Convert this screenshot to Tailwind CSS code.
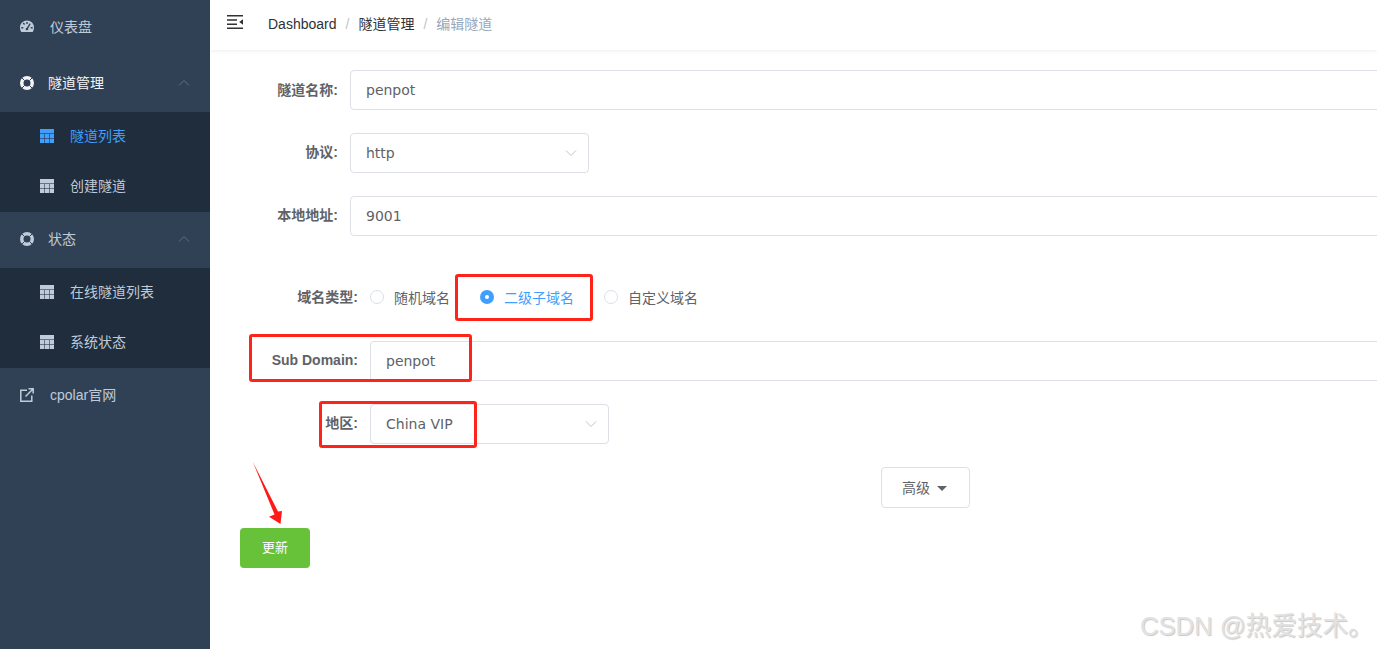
<!DOCTYPE html>
<html lang="zh">
<head>
<meta charset="utf-8">
<title>编辑隧道</title>
<script src="https://cdn.jsdelivr.net/npm/@tailwindcss/browser@4"></script>
</head>
<body class="overflow-hidden bg-white">
<div class="relative flex h-[649px] w-[1377px] overflow-hidden font-['Liberation_Sans','Noto_Sans_CJK_SC',sans-serif] text-sm">

  <aside class="h-full w-[210px] shrink-0 bg-[#304156] text-[#bfcbd9]">
    <div class="flex h-14 items-center pb-[2px] pl-5">
      <svg class="h-[14px] w-[14px] shrink-0" viewBox="0 0 14 14"><path fill="currentColor" fill-rule="evenodd" d="M7 .5C3.100.5 0 3.600 0 7.500c0 1.700.5 3.100 1.300 4.500h11.400c.8-1.400 1.300-2.800 1.300-4.500C14 3.600 10.900.5 7 .5ZM6.300 2h1.400v2H6.300ZM2.700 3.600l1-1 1.400 1.500-1 1ZM1.300 7h2v1.400h-2ZM10.700 7h2v1.400h-2ZM9.600 3.200l1.100.7-2.600 4.500a1.300 1.300 0 1 1-1.200-.7Z"/></svg>
      <span class="ml-4">仪表盘</span>
    </div>

    <div class="flex h-14 items-center pb-[2px] pl-5 pr-[20px] text-[#f4f4f5]">
      <svg class="h-[14px] w-[14px] shrink-0" viewBox="0 0 14 14"><circle cx="7" cy="7" r="5.250" fill="none" stroke="currentColor" stroke-width="3.500"/><path stroke="#304156" stroke-width="1" d="M2 2l2.500 2.500M12 2 9.500 4.500M2 12l2.500-2.500M12 12 9.500 9.500"/></svg>
      <span class="ml-[14px]">隧道管理</span>
      <svg class="ml-auto h-2 w-3 text-[#5f6f83]" viewBox="0 0 12 8"><path fill="none" stroke="currentColor" stroke-width="1" d="M1 6.500 6 1.500l5 5"/></svg>
    </div>
    <div class="bg-[#1f2d3d]">
      <div class="flex h-[50px] items-center pb-[2px] pl-10 text-[#409eff]">
        <svg class="h-[14px] w-[14px] shrink-0" viewBox="0 0 14 14"><rect width="14" height="14" fill="currentColor"/><path stroke="#1f2d3d" stroke-opacity=".55" d="M0 4.500h14M0 9.500h14M4.500 5v9M9.500 5v9"/></svg>
        <span class="ml-4">隧道列表</span>
      </div>
      <div class="flex h-[50px] items-center pb-[2px] pl-10">
        <svg class="h-[14px] w-[14px] shrink-0" viewBox="0 0 14 14"><rect width="14" height="14" fill="currentColor"/><path stroke="#1f2d3d" stroke-opacity=".55" d="M0 4.500h14M0 9.500h14M4.500 5v9M9.500 5v9"/></svg>
        <span class="ml-4">创建隧道</span>
      </div>
    </div>

    <div class="flex h-14 items-center pb-[2px] pl-5 pr-[20px]">
      <svg class="h-[14px] w-[14px] shrink-0" viewBox="0 0 14 14"><circle cx="7" cy="7" r="5.250" fill="none" stroke="currentColor" stroke-width="3.500"/><path stroke="#304156" stroke-width="1" d="M2 2l2.500 2.500M12 2 9.500 4.500M2 12l2.500-2.500M12 12 9.500 9.500"/></svg>
      <span class="ml-[14px]">状态</span>
      <svg class="ml-auto h-2 w-3 text-[#5f6f83]" viewBox="0 0 12 8"><path fill="none" stroke="currentColor" stroke-width="1" d="M1 6.500 6 1.500l5 5"/></svg>
    </div>
    <div class="bg-[#1f2d3d]">
      <div class="flex h-[50px] items-center pb-[2px] pl-10">
        <svg class="h-[14px] w-[14px] shrink-0" viewBox="0 0 14 14"><rect width="14" height="14" fill="currentColor"/><path stroke="#1f2d3d" stroke-opacity=".55" d="M0 4.500h14M0 9.500h14M4.500 5v9M9.500 5v9"/></svg>
        <span class="ml-4">在线隧道列表</span>
      </div>
      <div class="flex h-[50px] items-center pb-[2px] pl-10">
        <svg class="h-[14px] w-[14px] shrink-0" viewBox="0 0 14 14"><rect width="14" height="14" fill="currentColor"/><path stroke="#1f2d3d" stroke-opacity=".55" d="M0 4.500h14M0 9.500h14M4.500 5v9M9.500 5v9"/></svg>
        <span class="ml-4">系统状态</span>
      </div>
    </div>

    <div class="flex h-14 items-center pb-[2px] pl-5">
      <svg class="h-[14px] w-[14px] shrink-0" viewBox="0 0 14 14"><path fill="none" stroke="currentColor" stroke-width="1.500" d="M7 2.200H.8v11h11V7.500M5.500 8.500 13 1M8.500.8h4.700v4.700"/></svg>
      <span class="ml-4">cpolar官网</span>
    </div>
  </aside>

  <main class="min-w-0 flex-1 overflow-hidden">
    <header class="flex h-[50px] items-center shadow-[0_1px_4px_rgba(0,21,41,0.08)]">
      <svg class="mb-[7px] ml-[17px] h-[14px] w-4 shrink-0 text-[#303133]" viewBox="0 0 16 14"><path fill="currentColor" d="M0 0h16v1.500H0ZM0 4.200h10v1.500H0ZM0 8.400h10v1.500H0ZM0 12.500h16V14H0ZM16 4.200v5.600L12.200 7Z"/></svg>
      <nav class="ml-[25px] flex items-center pb-[2px] text-[#303133]">
        <span>Dashboard</span>
        <span class="mx-[9px] text-[#c0c4cc]">/</span>
        <span>隧道管理</span>
        <span class="mx-[9px] text-[#c0c4cc]">/</span>
        <span class="text-[#97a8be]">编辑隧道</span>
      </nav>
    </header>

    <form class="ml-[30px] w-[1371px] pt-5 text-[#606266]">
      <div class="flex items-center">
        <label class="w-[110px] shrink-0 pr-3 text-right font-bold">隧道名称:</label>
        <div class="flex h-10 flex-1 items-center rounded border border-[#dcdfe6] px-[15px] font-['DejaVu_Sans','Noto_Sans_CJK_SC',sans-serif]">penpot</div>
      </div>
      <div class="mt-[23px] flex items-center">
        <label class="w-[110px] shrink-0 pb-[2px] pr-3 text-right font-bold">协议:</label>
        <div class="flex h-10 w-[239px] items-center justify-between rounded border border-[#dcdfe6] pl-[15px] pr-[11px] font-['DejaVu_Sans','Noto_Sans_CJK_SC',sans-serif]">http
          <svg class="h-2 w-3 text-[#c0c4cc]" viewBox="0 0 12 8"><path fill="none" stroke="currentColor" d="M1 1.500 6 6.500l5-5"/></svg>
        </div>
      </div>
      <div class="mt-[23px] flex items-center">
        <label class="w-[110px] shrink-0 pb-[2px] pr-3 text-right font-bold">本地地址:</label>
        <div class="flex h-10 flex-1 items-center rounded border border-[#dcdfe6] px-[15px] font-['DejaVu_Sans','Noto_Sans_CJK_SC',sans-serif]">9001</div>
      </div>

      <div class="mt-[41px] flex h-10 items-center">
        <label class="w-[130px] shrink-0 pr-3 text-right font-bold">域名类型:</label>
        <div class="flex items-center">
          <span class="h-[14px] w-[14px] rounded-full border border-[#dcdfe6]"></span>
          <span class="ml-[10px] pt-[2px]">随机域名</span>
          <span class="ml-[30px] flex h-[14px] w-[14px] items-center justify-center rounded-full bg-[#409eff]"><span class="h-1 w-1 rounded-full bg-white"></span></span>
          <span class="ml-[10px] pt-[2px] text-[#409eff]">二级子域名</span>
          <span class="ml-[30px] h-[14px] w-[14px] rounded-full border border-[#dcdfe6]"></span>
          <span class="ml-[10px] pt-[2px]">自定义域名</span>
        </div>
      </div>
      <div class="mt-6 flex items-center">
        <label class="w-[130px] shrink-0 pb-[2px] pr-3 text-right font-bold">Sub Domain:</label>
        <div class="flex h-10 flex-1 items-center rounded border border-[#dcdfe6] px-[15px] font-['DejaVu_Sans','Noto_Sans_CJK_SC',sans-serif]">penpot</div>
      </div>
      <div class="mt-[23px] flex items-center">
        <label class="w-[130px] shrink-0 pb-[2px] pr-3 text-right font-bold">地区:</label>
        <div class="flex h-10 w-[239px] items-center justify-between rounded border border-[#dcdfe6] pl-[15px] pr-[11px] font-['DejaVu_Sans','Noto_Sans_CJK_SC',sans-serif]">China VIP
          <svg class="h-2 w-3 text-[#c0c4cc]" viewBox="0 0 12 8"><path fill="none" stroke="currentColor" d="M1 1.500 6 6.500l5-5"/></svg>
        </div>
      </div>

      <div class="mt-[23px] flex justify-center">
        <button type="button" class="flex h-[41px] w-[89px] items-center justify-center rounded border border-[#dcdfe6] bg-white pr-[2px] text-[#606266]">高级
          <span class="ml-[7px] mt-[1px] h-0 w-0 border-x-[5px] border-t-[5px] border-x-transparent border-t-[#606266]"></span>
        </button>
      </div>
      <button type="button" class="mt-5 block h-10 w-[70px] rounded bg-[#67c23a] text-[13px] text-white">更新</button>
    </form>
  </main>

  <div class="absolute left-[455px] top-[274px] h-[47px] w-[138px] rounded-[3px] border-[3px] border-[#ff2419]"></div>
  <div class="absolute left-[249px] top-[334px] h-[48px] w-[223px] rounded-[3px] border-[3px] border-[#ff2419]"></div>
  <div class="absolute left-[319px] top-[401px] h-[47px] w-[158px] rounded-[3px] border-[3px] border-[#ff2419]"></div>
  <svg class="absolute left-[250px] top-[460px] h-[66px] w-[36px]" viewBox="250 460 36 66"><polygon fill="#ff1a1a" points="252.700,461.700 278,511.500 282,511 280.500,524 269,516.700 274.500,514.500"/></svg>
  <div class="absolute left-[1140px] top-[609px] whitespace-nowrap text-[25.600px] leading-[34px] text-[#e2e2e2] [text-shadow:1px_1px_1px_rgba(0,0,0,0.22)]">CSDN @热爱技术。</div>
</div>
</body>
</html>
